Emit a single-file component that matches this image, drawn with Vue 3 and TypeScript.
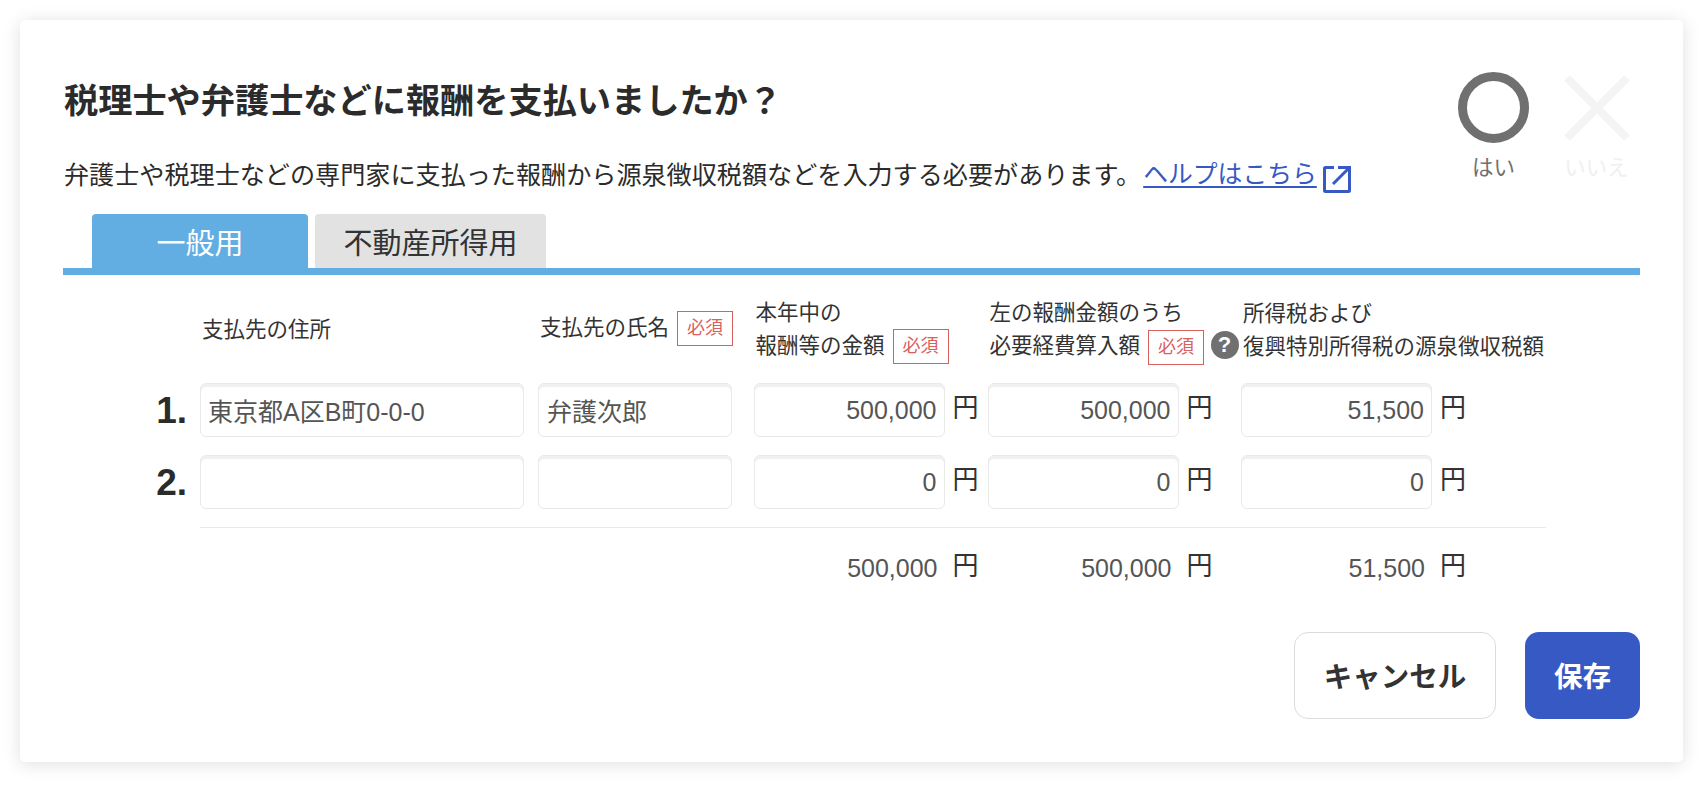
<script setup lang="ts">
import { ref } from "vue";

const rows = ref([
  { address: "東京都A区B町0-0-0", name: "弁護次郎", amount: "500,000", expense: "500,000", tax: "51,500" },
  { address: "", name: "", amount: "0", expense: "0", tax: "0" },
]);
const activeTab = ref("一般用");
const tabs = ["一般用", "不動産所得用"];
const totals = ["500,000", "500,000", "51,500"];
</script>

<template>
  <div class="page">
    <section class="card">
      <header class="head">
        <div class="head-text">
          <h1 class="title">税理士や弁護士などに報酬を支払いましたか？</h1>
          <p class="desc">
            弁護士や税理士などの専門家に支払った報酬から源泉徴収税額などを入力する必要があります。<a class="help" href="#">ヘルプはこちら</a>
            <svg class="ext" viewBox="0 0 28 28" fill="none" stroke="#3759c4" stroke-width="3">
              <path d="M11 2.5H2.5a1 1 0 0 0-1 1v22a1 1 0 0 0 1 1h23a1 1 0 0 0 1-1V14" />
              <path d="M15 2.5h11.5V14" />
              <path d="M26 3 10 19" />
            </svg>
          </p>
        </div>
        <div class="answers">
          <button class="answer on" type="button">
            <svg width="71" height="71" viewBox="0 0 71 71" fill="none" stroke="#707070" stroke-width="9"><circle cx="35.5" cy="35.5" r="31" /></svg>
            <span>はい</span>
          </button>
          <button class="answer off" type="button">
            <svg width="71" height="71" viewBox="0 0 71 71" fill="none" stroke="#f4f4f4" stroke-width="8"><path d="M6 6l60 60M66 6 6 66" /></svg>
            <span>いいえ</span>
          </button>
        </div>
      </header>

      <nav class="tabs">
        <button
          v-for="tab in tabs"
          :key="tab"
          type="button"
          :class="['tab', { active: tab === activeTab }]"
          @click="activeTab = tab"
        >
          {{ tab }}
        </button>
      </nav>

      <div class="table">
        <div class="th th-first"></div>
        <div class="th"><span class="th-one">支払先の住所</span></div>
        <div class="th th-name">支払先の氏名<span class="req">必須</span></div>
        <div class="th">本年中の<br />報酬等の金額<span class="req">必須</span></div>
        <div class="th th-help">
          左の報酬金額のうち<br />必要経費算入額<span class="req low">必須</span>
          <span class="q">?</span>
        </div>
        <div class="th th-last">所得税および<br />復興特別所得税の源泉徴収税額</div>

        <template v-for="(row, i) in rows" :key="i">
          <div class="num">{{ i + 1 }}.</div>
          <div class="cell"><input v-model="row.address" class="input wide" type="text" /></div>
          <div class="cell"><input v-model="row.name" class="input mid" type="text" /></div>
          <div class="cell"><input v-model="row.amount" class="input money" type="text" /><span class="yen">円</span></div>
          <div class="cell"><input v-model="row.expense" class="input money" type="text" /><span class="yen">円</span></div>
          <div class="cell"><input v-model="row.tax" class="input money" type="text" /><span class="yen">円</span></div>
        </template>

        <div class="divider"></div>

        <div class="total-gap"></div>
        <div v-for="(t, i) in totals" :key="i" class="cell total">
          <span class="total-val">{{ t }}</span><span class="yen">円</span>
        </div>
      </div>

      <footer class="foot">
        <button class="btn cancel" type="button">キャンセル</button>
        <button class="btn save" type="button">保存</button>
      </footer>
    </section>
  </div>
</template>

<style scoped>
.page {
  height: 796px;
  padding: 20px 25px 34px 20px;
  box-sizing: border-box;
  background: #fff;
  font-family: "Liberation Sans", "Noto Sans CJK JP", sans-serif;
  color: #2b2b2b;
}

.card {
  height: 742px;
  box-sizing: border-box;
  padding: 46px 43px 0 43px;
  background: #fff;
  border-radius: 5px;
  box-shadow: 0 2px 18px rgba(0, 0, 0, 0.13);
}

.head {
  display: flex;
  justify-content: space-between;
  height: 148px;
}

.head-text {
  padding-left: 1px;
}

.title {
  margin: 11px 0 0;
  font-size: 34.2px;
  line-height: 48px;
  font-weight: 700;
  color: #2b2b2b;
}

.desc {
  display: flex;
  align-items: flex-start;
  margin: 32px 0 0;
  font-size: 25.12px;
  line-height: 36px;
  white-space: nowrap;
  color: #2b2b2b;
}

.help {
  margin-left: 2px;
  font-size: 24.8px;
  color: #3759c4;
  text-decoration: underline;
  text-underline-offset: 3px;
}

.ext {
  width: 28px;
  height: 28px;
  margin: 8px 0 0 6px;
}

.answers {
  display: flex;
  gap: 32px;
  margin: 6px 8px 0 0;
}

.answer {
  display: flex;
  flex-direction: column;
  align-items: center;
  width: 71px;
  padding: 0;
  border: 0;
  background: none;
  font: inherit;
  font-size: 21.5px;
  line-height: 30px;
  cursor: pointer;
}

.answer span {
  margin-top: 10px;
  white-space: nowrap;
}

.answer.on {
  color: #707070;
}

.answer.off {
  color: #f0f0f0;
}

.tabs {
  display: flex;
  gap: 7px;
  padding-left: 29px;
  border-bottom: 7px solid #62aee3;
}

.tab {
  height: 54px;
  padding: 0;
  border: 0;
  border-radius: 4px 4px 0 0;
  background: #e2e2e2;
  font: inherit;
  font-size: 29px;
  color: #333;
  width: 231px;
  cursor: pointer;
}

.tab.active {
  width: 216px;
  background: #62aee3;
  color: #fff;
}

.table {
  display: grid;
  grid-template-columns: 137px 338px 215.5px 234px 253.5px 1fr;
  margin-top: 18px;
}

.th {
  height: 86px;
  padding: 4px 0 0 2px;
  font-size: 21.5px;
  line-height: 33px;
  color: #333;
  white-space: nowrap;
  position: relative;
}

.th-last {
  padding-top: 5px;
  height: 85px;
}

.th-one {
  display: block;
  padding-top: 17px;
}

.th-name {
  padding-top: 19px;
  height: 71px;
}

.req {
  display: inline-block;
  width: 56px;
  height: 35px;
  margin: -1px 0 -1px 8px;
  box-sizing: border-box;
  border: 1px solid #d9605c;
  font-size: 18px;
  line-height: 33px;
  text-align: center;
  color: #d9605c;
  vertical-align: top;
}

.req.low {
  position: relative;
  top: 1px;
}

/* the help mark sits over the gap between the two columns */
.q {
  position: absolute;
  left: 223px;
  top: 38px;
  width: 28px;
  height: 28px;
  border-radius: 50%;
  background: #707070;
  color: #fff;
  font-size: 22px;
  font-weight: 700;
  line-height: 28px;
  text-align: center;
}

.num {
  height: 54px;
  margin-bottom: 18px;
  padding-right: 13px;
  text-align: right;
  font-size: 37px;
  font-weight: 700;
  line-height: 56px;
  color: #2b2b2b;
}

.cell {
  display: flex;
  align-items: flex-start;
  height: 54px;
  margin-bottom: 18px;
}

.input {
  height: 54px;
  box-sizing: border-box;
  padding: 0 8px;
  border: 1px solid #e9e9e9;
  border-radius: 6px;
  box-shadow: inset 0 3px 0 #f0f0f0;
  background: #fff;
  font: inherit;
  font-size: 25px;
  color: #555;
  outline: none;
}

.wide {
  width: 324px;
  padding-left: 7px;
}

.mid {
  width: 194px;
}

.money {
  width: 191px;
  padding-right: 7px;
  text-align: right;
}

.yen {
  margin: 7px 0 0 8px;
  font-size: 26px;
  line-height: 36px;
  color: #333;
}

.divider {
  grid-column: 2 / -1;
  height: 1px;
  margin: 0 94px 0 0;
  background: #e9e9e9;
}

.total-gap {
  grid-column: 1 / 4;
}

.total {
  height: 40px;
  margin: 20px 0 0;
}

.total-val {
  width: 184px;
  text-align: right;
  font-size: 25px;
  line-height: 40px;
  color: #555;
}

.total .yen {
  margin: 0 0 0 15px;
}

.foot {
  display: flex;
  justify-content: flex-end;
  gap: 29px;
  margin-top: 44px;
}

.btn {
  height: 87px;
  padding: 0 0 2px;
  border-radius: 14px;
  font: inherit;
  font-size: 28.5px;
  font-weight: 700;
  cursor: pointer;
}

.cancel {
  width: 202px;
  border: 1px solid #dcdcdc;
  background: #fff;
  color: #333;
}

.save {
  width: 115px;
  border: 0;
  background: #3759c4;
  color: #fff;
}
</style>

<style>
html,
body {
  margin: 0;
  background: #fff;
}
</style>
